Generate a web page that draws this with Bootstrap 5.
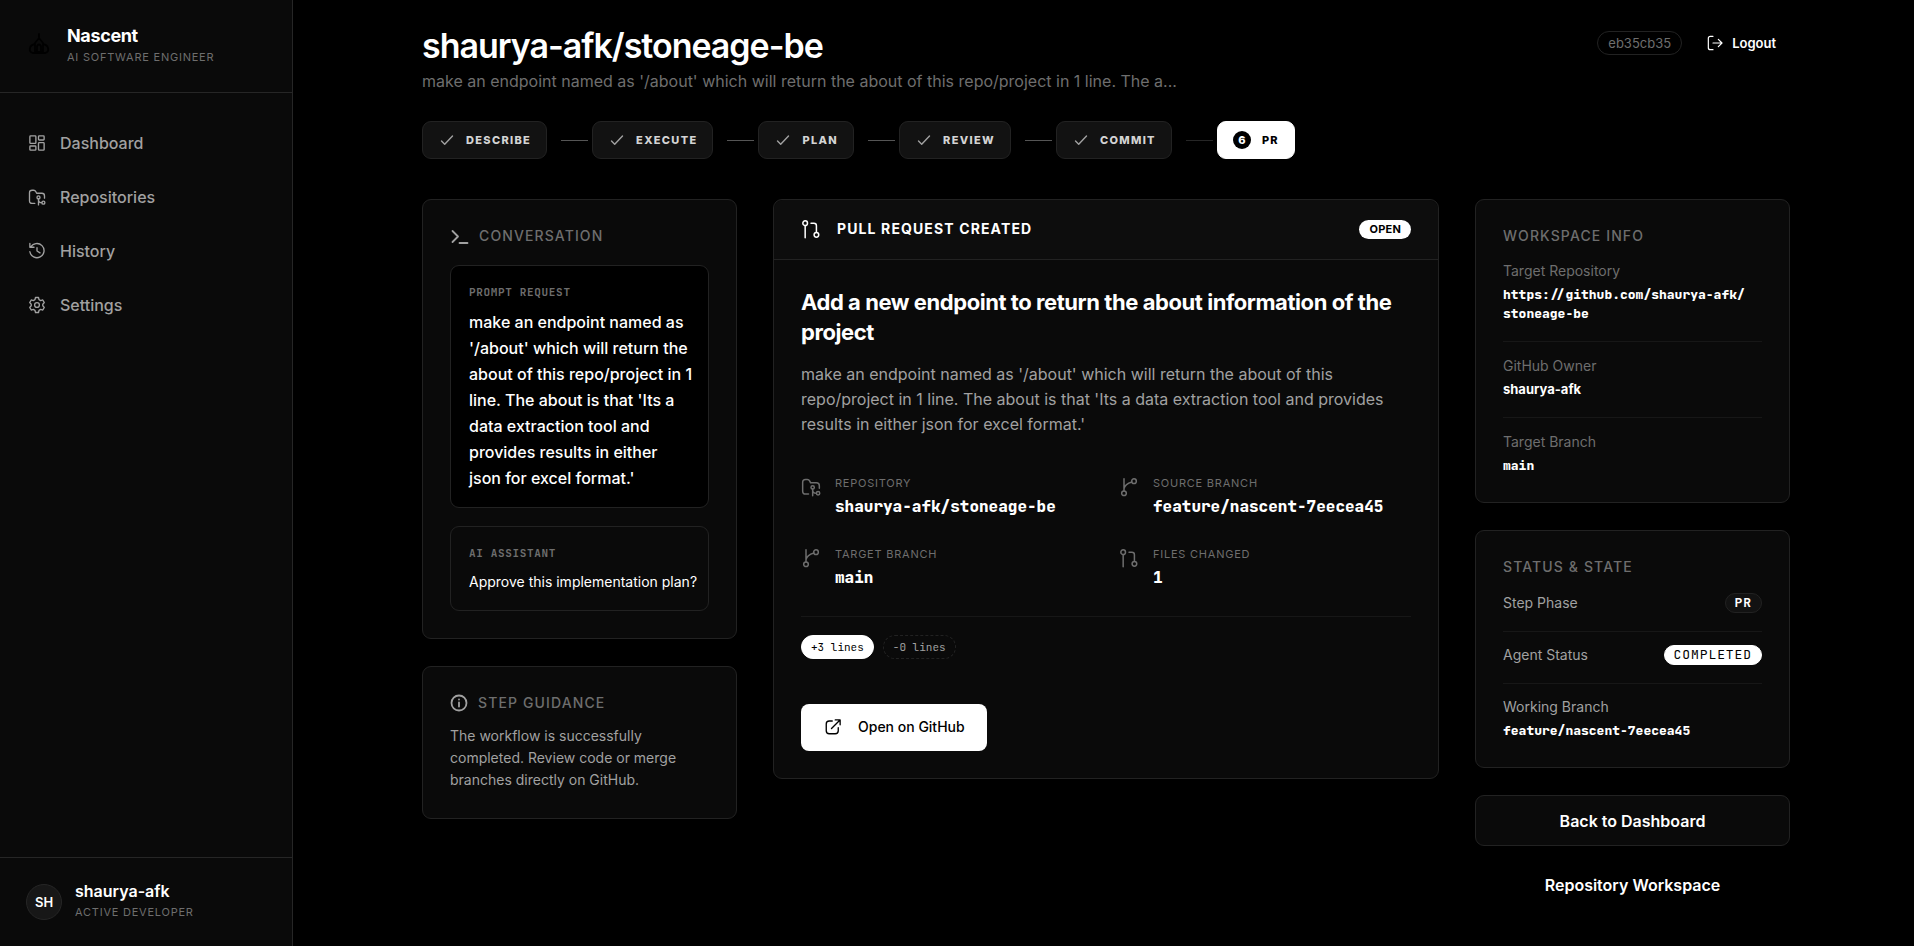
<!DOCTYPE html>
<html lang="en" data-bs-theme="dark">
<head>
<meta charset="utf-8">
<meta name="viewport" content="width=device-width, initial-scale=1">
<title>Nascent – shaurya-afk/stoneage-be</title>
<link href="https://cdn.jsdelivr.net/npm/bootstrap@5.3.0/dist/css/bootstrap.min.css" rel="stylesheet">
<style>
:root{--line:#222;--line-soft:#171717;--panel:#0a0a0a;--chip:#121212;--dim:#6e6e6e;--soft:#a1a1a1}
body{background:#000;color:#fff;font-family:Inter,"Liberation Sans",sans-serif;font-size:14px;line-height:20px}
svg{fill:none;stroke:currentColor;stroke-width:1.8;stroke-linecap:round;stroke-linejoin:round;flex:none;display:block}
a{color:inherit;text-decoration:none}
.mono{font-family:"JetBrains Mono","DejaVu Sans Mono",monospace}
.dim{color:var(--dim)}
.soft{color:var(--soft)}

.sidebar{width:293px;height:100vh;background:var(--panel);border-right:1px solid #262626}
.brand{padding:22px 26px 27px;gap:15px;border-bottom:1px solid #262626}
.brand-name{font-size:18px;font-weight:700;line-height:27px;letter-spacing:-.02em}
.brand-logo{color:#000}
.overline{font-size:11px;line-height:16px;letter-spacing:.07em;text-transform:uppercase}
.side-nav{padding:23px 0;gap:0}
.side-nav .nav-link{display:flex;align-items:center;gap:14px;padding:15px 28px;font-size:16px;line-height:24px;font-weight:500;color:var(--soft)}
.side-user{padding:20px 26px 26px;gap:13px;border-top:1px solid #262626}
.avatar{width:36px;height:36px;background:#171717;border:1px solid #262626;font-size:13px;font-weight:600}
.user-name{font-size:16px;line-height:26px;font-weight:600}

.workspace{padding:26px 24px 36px 29px;min-width:0}
.page-wrap{max-width:1368px;margin:0 auto}
.page-title{font-size:34px;line-height:40px;font-weight:600;letter-spacing:-.03em;margin:0 0 3px}
.page-sub{font-size:16px;line-height:24px;color:var(--dim);margin:0}
.hash{font-size:13px;line-height:22px;padding:0 10px;border:1px solid var(--line);color:var(--dim)}
.head-tools{padding:5px 14px 0 0;gap:25px}
.btn-logout{font-size:13px;line-height:20px;font-weight:600;padding:0;gap:9px;border:0}

.steps{margin:28px 0 40px;list-style:none;padding:0}
.step{height:38px;padding:0 15px 0 16px;gap:11px;font-size:11px;font-weight:800;letter-spacing:.12em;border:1px solid var(--line);border-radius:9px;background:var(--chip);color:#d4d4d4}
.step svg{color:var(--soft);stroke-width:1.4}
.step.current{background:#fff;border-color:#fff;color:#000;padding-left:15px}
.step-num{width:18px;height:18px;background:#000;color:#fff;font-size:11px;letter-spacing:0}
.link-line{width:27px;height:1px;background:#555;margin:0 4px 0 14px}
.link-line.pending{background:#262626}

.board{display:grid;grid-template-columns:315px minmax(0,1fr) 315px;gap:36px;align-items:start}
.stack{display:flex;flex-direction:column;gap:27px}
.panel{background:var(--panel);border:1px solid var(--line);border-radius:9px}
.panel-pad{padding:27px}
.panel-title{font-size:14px;line-height:18px;font-weight:500;letter-spacing:.08em;color:var(--dim);margin:0;text-transform:uppercase}
.panel-head{gap:10px}
.msg{border:1px solid var(--line);border-radius:9px;padding:18px 10px 16px 18px}
.msg.prompt{background:#000}
.msg + .msg{margin-top:18px}
.msg-tag{font-size:11px;line-height:16px;font-weight:600;letter-spacing:.06em;color:var(--dim);margin-bottom:9px}
.msg-text{font-size:16px;line-height:26px;font-weight:500}
.reply{line-height:24px}
.guide-head{margin-bottom:13px}
.guide{line-height:22px}

.pr-head{padding:17px 27px 18px;border-bottom:1px solid var(--line);background:#0d0d0d;border-radius:9px 9px 0 0}
.pr-head h2{font-size:14px;line-height:24px;font-weight:700;letter-spacing:.08em;margin:0}
.tag-open{background:#fff;color:#000;font-size:11px;line-height:19px;font-weight:700;padding:0 10px;letter-spacing:.02em}
.pr-title{font-size:22px;line-height:30px;font-weight:700;letter-spacing:-.02em;margin:0 0 15px}
.pr-desc{font-size:16px;line-height:25px;color:var(--soft);margin:0 0 38px}
.meta-grid{display:grid;grid-template-columns:1fr 1fr;gap:27px 26px}
.meta-cell{gap:14px}
.meta-cell svg{margin-top:2px}
.meta-value{font-size:16px;line-height:24px;font-weight:800;margin-top:4px}
.lines-row{border-top:1px solid var(--line-soft);margin-top:26px;padding-top:18px;gap:9px}
.lines-tag{font-size:11px;line-height:22px;padding:0 9px;border:1px solid #fff;background:#fff;color:#000}
.lines-tag.removed{background:none;border:1px dashed var(--line);color:var(--soft)}
.btn-github{margin-top:45px;background:#fff!important;color:#000!important;font-size:14px;line-height:20px;font-weight:500;padding:13px 22px 14px 23px;gap:16px;border:0;border-radius:8px}

.info-row{padding:14px 0 18px;border-bottom:1px solid var(--line-soft)}
.info-row.tight{padding-top:13px}
.info-row:first-of-type{padding-top:0}
.info-row:last-child{padding-bottom:0;border-bottom:0}
.info-value{font-size:13px;line-height:19px;font-weight:800;margin-top:4px;overflow-wrap:anywhere}
.info-value.plain{font-weight:700}
.state-title{margin-bottom:17px}
.state-tag{font-size:13px;line-height:18px;padding:0 9px;border:1px solid var(--line);background:var(--chip);letter-spacing:.07em}
.state-tag.done{background:#fff;border-color:#fff;color:#000}
.side-actions{gap:13px}
.btn-side{height:51px;font-size:16px;font-weight:600;border-radius:9px;width:100%}
.btn-side.boxed{background:var(--panel);border:1px solid var(--line)}
.btn{color:#fff}
.btn:hover{color:#fff;opacity:.85}
</style>
</head>
<body>
<svg class="d-none" aria-hidden="true">
  <symbol id="i-check" viewBox="0 0 16 16"><path d="M2.500 9l3.200 3.200L13.500 4"/></symbol>
  <symbol id="i-repo" viewBox="0 0 24 24"><path d="M9 20.500H5.500q-3.500 0-3.500-3.500V6.500q0-3.500 3.500-3.500h2q2 0 3 2l1 2h7q3.500 0 3.500 3.500v3"/><circle cx="14" cy="12.500" r="2"/><path d="M14 14.500v8M14 15.500q0 4 4.500 4"/><circle cx="20.500" cy="19.500" r="2"/></symbol>
  <symbol id="i-branch" viewBox="0 0 24 24"><circle cx="6" cy="19.500" r="2.800"/><circle cx="18" cy="5" r="2.800"/><path d="M6 16.500V2M6 14q1-5.500 9.500-8"/></symbol>
  <symbol id="i-pr" viewBox="0 0 24 24"><circle cx="5" cy="5" r="2.800"/><circle cx="18.500" cy="19" r="2.800"/><path d="M5 8v14.500M12 5h3.500q3 0 3 3v8"/></symbol>
</svg>
<div class="d-flex align-items-start">
  <aside class="sidebar d-flex flex-column flex-shrink-0 sticky-top">
    <div class="brand d-flex align-items-center">
      <svg class="brand-logo" width="26" height="26" viewBox="0 0 26 26"><path d="M13 3v4M13 7l-4 5v9M13 7l4 5v9M9 21h8M9 13c-6 1-7 8-2 9h12c5-1 4-8-2-9M11 21v-6q2-3 4 0v6"/></svg>
      <div>
        <div class="brand-name">Nascent</div>
        <div class="overline dim">AI Software Engineer</div>
      </div>
    </div>
    <nav class="side-nav nav flex-column flex-nowrap flex-grow-1">
      <a class="nav-link" href="#"><svg width="18" height="18" viewBox="0 0 24 24"><rect x="2.500" y="2.500" width="8" height="10" rx="1"/><rect x="14" y="2.500" width="7.500" height="5.500" rx="1"/><rect x="2.500" y="16" width="8" height="5.500" rx="1"/><rect x="14" y="11.500" width="7.500" height="10" rx="1"/></svg>Dashboard</a>
      <a class="nav-link" href="#"><svg width="18" height="18"><use href="#i-repo"/></svg>Repositories</a>
      <a class="nav-link" href="#"><svg width="18" height="18" viewBox="0 0 24 24"><path d="M3.500 7A9.500 9.500 0 1 1 2.500 13M2.500 2v5H8M12 7.500V12l4 2.500"/></svg>History</a>
      <a class="nav-link" href="#"><svg width="18" height="18" viewBox="0 0 24 24"><circle cx="12" cy="12" r="3.200"/><path d="M10 2h4l.7 2.900 2.200 1.200 2.800-.8 2 3.500-2 2.200v2l2 2.200-2 3.500-2.800-.8-2.200 1.200-.7 2.900h-4l-.7-2.900-2.200-1.200-2.800.8-2-3.500 2-2.200v-2l-2-2.200 2-3.500 2.800.8 2.200-1.200z"/></svg>Settings</a>
    </nav>
    <div class="side-user d-flex align-items-end">
      <div class="avatar rounded-circle d-flex align-items-center justify-content-center">SH</div>
      <div>
        <div class="user-name">shaurya-afk</div>
        <div class="overline dim">Active Developer</div>
      </div>
    </div>
  </aside>

  <main class="workspace flex-grow-1">
    <div class="page-wrap">
      <header class="d-flex justify-content-between align-items-start">
        <div>
          <h1 class="page-title">shaurya-afk/stoneage-be</h1>
          <p class="page-sub">make an endpoint named as '/about' which will return the about of this repo/project in 1 line. The a...</p>
        </div>
        <div class="head-tools d-flex align-items-center">
          <span class="hash rounded-pill">eb35cb35</span>
          <button type="button" class="btn btn-logout d-flex align-items-center"><svg width="16" height="16" viewBox="0 0 24 24" stroke-width="2"><path d="M9 2H5q-3 0-3 3v14q0 3 3 3h4M9 12h13M17 6.500l5.500 5.500-5.500 5.500"/></svg>Logout</button>
        </div>
      </header>

      <ol class="steps d-flex align-items-center">
        <li class="step d-flex align-items-center"><svg width="16" height="16"><use href="#i-check"/></svg>DESCRIBE</li>
        <li class="link-line"></li>
        <li class="step d-flex align-items-center"><svg width="16" height="16"><use href="#i-check"/></svg>EXECUTE</li>
        <li class="link-line"></li>
        <li class="step d-flex align-items-center"><svg width="16" height="16"><use href="#i-check"/></svg>PLAN</li>
        <li class="link-line"></li>
        <li class="step d-flex align-items-center"><svg width="16" height="16"><use href="#i-check"/></svg>REVIEW</li>
        <li class="link-line"></li>
        <li class="step d-flex align-items-center"><svg width="16" height="16"><use href="#i-check"/></svg>COMMIT</li>
        <li class="link-line pending"></li>
        <li class="step current d-flex align-items-center"><span class="step-num rounded-circle d-flex align-items-center justify-content-center">6</span>PR</li>
      </ol>

      <div class="board">
        <div class="stack">
          <section class="panel panel-pad">
            <div class="panel-head d-flex align-items-center mb-3 pb-1">
              <svg class="soft" width="19" height="18" viewBox="0 0 19 18"><path d="M2.500 4l5.500 5.500L2.500 15M9.500 16h8"/></svg>
              <h2 class="panel-title">Conversation</h2>
            </div>
            <div class="msg prompt">
              <div class="msg-tag mono">PROMPT REQUEST</div>
              <div class="msg-text">make an endpoint named as '/about' which will return the about of this repo/project in 1 line. The about is that 'Its a data extraction tool and provides results in either json&nbsp;for excel format.'</div>
            </div>
            <div class="msg">
              <div class="msg-tag mono">AI ASSISTANT</div>
              <div class="reply">Approve this implementation plan?</div>
            </div>
          </section>
          <section class="panel panel-pad">
            <div class="panel-head guide-head d-flex align-items-center">
              <svg class="soft" width="18" height="18" viewBox="0 0 18 18"><circle cx="9" cy="9" r="7.500"/><path d="M9 8.500v4M9 5.500v.1"/></svg>
              <h2 class="panel-title">Step Guidance</h2>
            </div>
            <p class="guide soft mb-0">The workflow is successfully completed. Review code or merge branches directly on GitHub.</p>
          </section>
        </div>

        <section class="panel">
          <div class="pr-head d-flex align-items-center justify-content-between">
            <div class="d-flex align-items-center gap-3">
              <svg width="20" height="24"><use href="#i-pr"/></svg>
              <h2>PULL REQUEST CREATED</h2>
            </div>
            <span class="tag-open rounded-pill">OPEN</span>
          </div>
          <div class="panel-pad">
            <h3 class="pr-title">Add a new endpoint to return the about information of the project</h3>
            <p class="pr-desc">make an endpoint named as '/about' which will return the about of this repo/project in 1 line. The about is that 'Its a data extraction tool and provides results in either json for excel format.'</p>
            <div class="meta-grid">
              <div class="meta-cell d-flex"><svg class="dim" width="20" height="20"><use href="#i-repo"/></svg><div><div class="overline dim">Repository</div><div class="meta-value mono">shaurya-afk/stoneage-be</div></div></div>
              <div class="meta-cell d-flex"><svg class="dim" width="20" height="20"><use href="#i-branch"/></svg><div><div class="overline dim">Source Branch</div><div class="meta-value mono">feature/nascent-7eecea45</div></div></div>
              <div class="meta-cell d-flex"><svg class="dim" width="20" height="20"><use href="#i-branch"/></svg><div><div class="overline dim">Target Branch</div><div class="meta-value mono">main</div></div></div>
              <div class="meta-cell d-flex"><svg class="dim" width="20" height="20"><use href="#i-pr"/></svg><div><div class="overline dim">Files Changed</div><div class="meta-value mono">1</div></div></div>
            </div>
            <div class="lines-row d-flex">
              <span class="lines-tag mono rounded-pill">+3 lines</span>
              <span class="lines-tag removed mono rounded-pill">-0 lines</span>
            </div>
            <a class="btn btn-github d-inline-flex align-items-center" href="#"><svg width="18" height="18" viewBox="0 0 24 24"><path d="M11 4H7Q3 4 3 8v9q0 4 4 4h8q4 0 4-4v-4M10 14L21 3M15 2.500h6.500V9"/></svg>Open on GitHub</a>
          </div>
        </section>

        <div class="stack">
          <section class="panel panel-pad">
            <h2 class="panel-title mb-3">Workspace Info</h2>
            <div class="info-row"><div class="dim">Target Repository</div><div class="info-value mono">https://github.com/shaurya-afk/<wbr>stoneage-be</div></div>
            <div class="info-row"><div class="dim">GitHub Owner</div><div class="info-value plain">shaurya-afk</div></div>
            <div class="info-row"><div class="dim">Target Branch</div><div class="info-value mono">main</div></div>
          </section>
          <section class="panel panel-pad">
            <h2 class="panel-title state-title">Status &amp; State</h2>
            <div class="info-row tight d-flex justify-content-between"><span class="soft">Step Phase</span><span class="state-tag mono rounded-pill fw-bold">PR</span></div>
            <div class="info-row tight d-flex justify-content-between"><span class="soft">Agent Status</span><span class="state-tag done mono rounded-pill">COMPLETED</span></div>
            <div class="info-row tight"><div class="soft">Working Branch</div><div class="info-value mono">feature/nascent-7eecea45</div></div>
          </section>
          <div class="side-actions d-flex flex-column">
            <button type="button" class="btn btn-side boxed">Back to Dashboard</button>
            <button type="button" class="btn btn-side border-0">Repository Workspace</button>
          </div>
        </div>
      </div>
    </div>
  </main>
</div>
<script src="https://cdn.jsdelivr.net/npm/bootstrap@5.3.0/dist/js/bootstrap.bundle.min.js"></script>
</body>
</html>
